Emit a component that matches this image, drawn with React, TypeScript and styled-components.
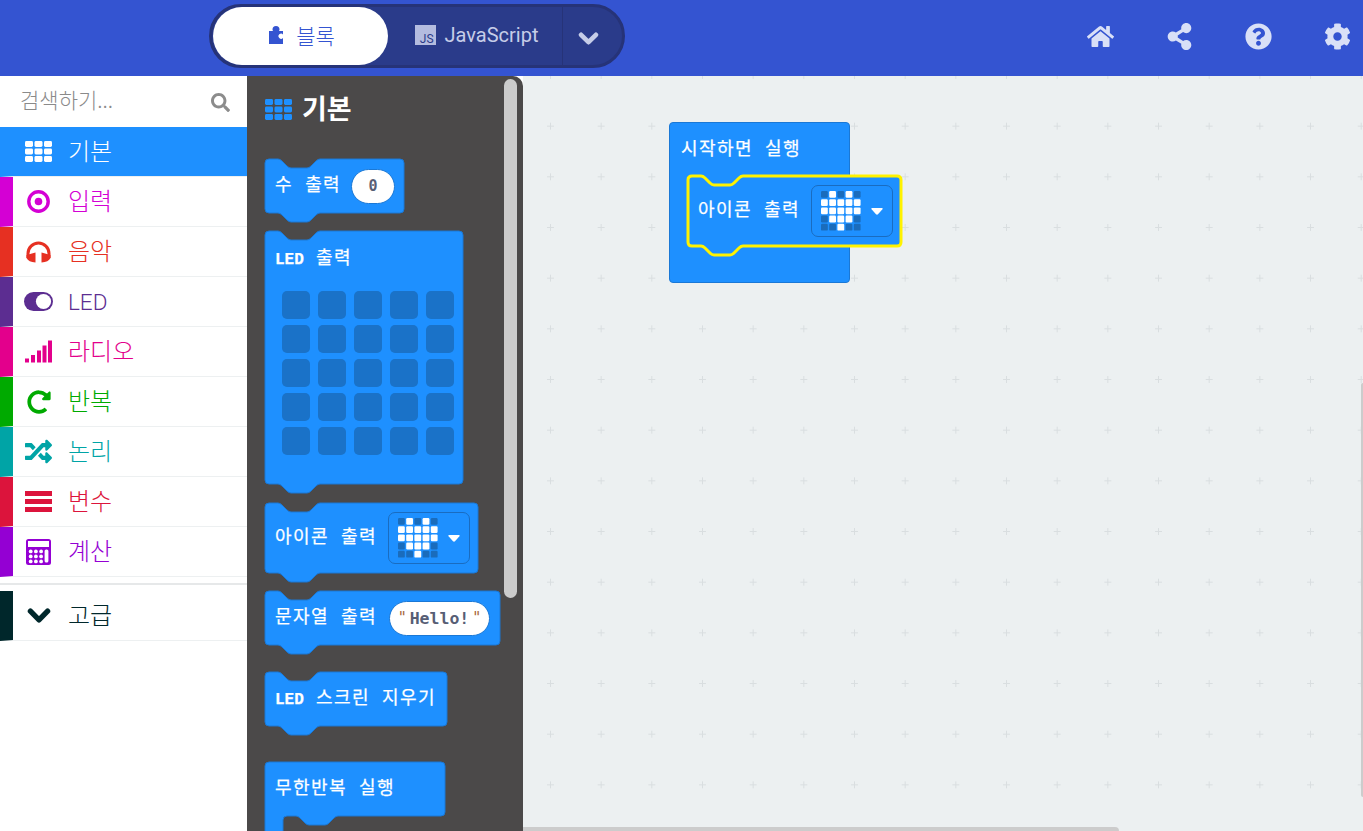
import styled, { createGlobalStyle } from "styled-components";
import {
  FaCog,
  FaHome,
  FaQuestionCircle,
  FaRandom,
  FaRedoAlt,
  FaSearch,
  FaShareAlt,
} from "react-icons/fa";

const HEART = [
  [0, 1, 0, 1, 0],
  [1, 1, 1, 1, 1],
  [1, 1, 1, 1, 1],
  [0, 1, 1, 1, 0],
  [0, 0, 1, 0, 0],
];

const KR = `"Noto Sans CJK KR", "Noto Sans", sans-serif`;

const notchTop = (x: number, y: number) =>
  `H${x + 13} Q${x + 15} ${y} ${x + 17} ${y + 2} L${x + 22} ${y + 7} Q${x + 24} ${y + 9} ${x + 26} ${y + 9} H${x + 42} Q${x + 44} ${y + 9} ${x + 46} ${y + 7} L${x + 51} ${y + 2} Q${x + 53} ${y} ${x + 55} ${y}`;

const notchBack = (x: number, y: number) =>
  `H${x + 55} Q${x + 53} ${y} ${x + 51} ${y + 2} L${x + 46} ${y + 7} Q${x + 44} ${y + 9} ${x + 42} ${y + 9} H${x + 26} Q${x + 24} ${y + 9} ${x + 22} ${y + 7} L${x + 17} ${y + 2} Q${x + 15} ${y} ${x + 13} ${y}`;

const blockPath = (w: number, h: number) =>
  `M4 0 ${notchTop(0, 0)} H${w - 4} Q${w} 0 ${w} 4 V${h - 4} Q${w} ${h} ${w - 4} ${h} ${notchBack(0, h)} H4 Q0 ${h} 0 ${h - 4} V4 Q0 0 4 0 Z`;

const loopPath = (w: number, h: number) =>
  `M4 0 H${w - 4} Q${w} 0 ${w} 4 V${h - 4} Q${w} ${h} ${w - 4} ${h} ${notchBack(18, h)} H22 Q18 ${h} 18 ${h + 4} V120 H0 V4 Q0 0 4 0 Z`;

const GlobalStyle = createGlobalStyle`
  html, body {
    margin: 0;
    height: 100%;
    overflow: hidden;
  }
  body {
    font-family: ${KR};
  }
`;

const Page = styled.div`
  width: 1363px;
  height: 831px;
  display: flex;
  flex-direction: column;
  overflow: hidden;
`;

const Header = styled.header`
  height: 76px;
  flex: none;
  display: flex;
  align-items: flex-start;
  background: #3454d1;
  padding: 4px 12px 0 209px;
  box-sizing: border-box;
`;

const Toggle = styled.div`
  width: 416px;
  height: 64px;
  box-sizing: border-box;
  display: flex;
  align-items: stretch;
  background: #2a3b8a;
  border: 3px solid #263378;
  border-radius: 32px;
  padding: 0 0 0 1px;
`;

const BlocksTab = styled.div`
  width: 175px;
  background: #fff;
  border-radius: 29px;
  display: flex;
  align-items: center;
  justify-content: center;
  gap: 13px;
  color: #3454d1;
  font-size: 21px;
  font-weight: 300;
  padding: 0 0 3px 3px;
  box-sizing: border-box;
`;

const JsTab = styled.div`
  width: 174px;
  display: flex;
  align-items: center;
  justify-content: center;
  gap: 9px;
  color: #c6cde8;
  font-family: Roboto, sans-serif;
  font-size: 20px;
  padding: 0 0 2px 3px;
  box-sizing: border-box;
`;

const JsBadge = styled.span`
  width: 21px;
  height: 20px;
  background: #b4bcdf;
  color: #2a3b8a;
  font-family: Roboto, sans-serif;
  font-size: 12px;
  line-height: 12px;
  display: flex;
  align-items: flex-end;
  justify-content: flex-end;
  padding: 0 2px 0 0;
  box-sizing: border-box;
`;

const MoreTab = styled.div`
  flex: 1;
  display: flex;
  align-items: center;
  justify-content: center;
  border-left: 1px solid #263378;
  color: #c6cde8;
  padding: 5px 8px 0 0;
`;

const HeaderIcons = styled.div`
  margin-left: auto;
  display: flex;
  gap: 52px;
  color: #d9e0f7;
  font-size: 27px;
  padding-top: 19px;
`;

const Main = styled.main`
  flex: 1;
  display: flex;
  min-height: 0;
`;

const Toolbox = styled.aside`
  width: 247px;
  flex: none;
  background: #fff;
`;

const Search = styled.div`
  height: 51px;
  display: flex;
  align-items: center;
  justify-content: space-between;
  padding: 0 17px 5px 20px;
  color: #8a8a8a;
  font-size: 21px;
  font-weight: 300;
  box-sizing: border-box;
`;

const SearchGlass = styled(FaSearch)`
  font-size: 19px;
  color: #8c8c8c;
  margin-top: 6px;
`;

const Row = styled.div<{ $color: string; $selected?: boolean }>`
  height: 50px;
  box-sizing: border-box;
  display: flex;
  align-items: center;
  border-left: 13px solid ${(p) => (p.$selected ? "#1e90ff" : p.$color)};
  border-bottom: 1px solid #edf0f1;
  background: ${(p) => (p.$selected ? "#1e90ff" : "#fff")};
  color: ${(p) => (p.$selected ? "#fff" : p.$color)};
`;

const RowIcon = styled.span`
  width: 29px;
  height: 29px;
  margin-left: 11px;
  display: flex;
  align-items: center;
  justify-content: center;
`;

const RowLabel = styled.span<{ $latin?: boolean }>`
  margin-left: 15px;
  font-family: ${(p) => (p.$latin ? "Roboto, sans-serif" : KR)};
  font-size: ${(p) => (p.$latin ? "22.5px" : "24px")};
  font-weight: 300;
  line-height: 30px;
  margin-top: ${(p) => (p.$latin ? "0" : "-3px")};
`;

const Separator = styled.div`
  height: 8px;
  margin-bottom: 6px;
  border-bottom: 2px solid #e6e8e9;
  box-sizing: border-box;
`;

const Flyout = styled.section`
  width: 276px;
  flex: none;
  position: relative;
  background: #4b4949;
  border-radius: 0 10px 0 0;
  overflow: hidden;
  padding: 12px 0 0 18px;
  box-sizing: border-box;
`;

const FlyoutTitle = styled.div`
  display: flex;
  align-items: center;
  gap: 10px;
  height: 38px;
  color: #fff;
  font-size: 27px;
  font-weight: 700;
  svg {
    color: #1e90ff;
    margin-top: 4px;
  }
`;

const FlyoutScroll = styled.div`
  position: absolute;
  top: 3px;
  right: 6px;
  width: 13px;
  height: 519px;
  border-radius: 7px;
  background: #cccccc;
`;

const Block = styled.div<{ $w: number; $h: number; $mt?: number }>`
  position: relative;
  width: ${(p) => p.$w}px;
  height: ${(p) => p.$h}px;
  margin-top: ${(p) => p.$mt ?? 0}px;
  flex: none;
`;

const Shape = styled.svg`
  position: absolute;
  left: 0;
  top: 0;
  overflow: visible;
`;

const BlockRow = styled.div`
  position: relative;
  height: 100%;
  display: flex;
  align-items: center;
  padding: 0 8px 0 10px;
  gap: 8px;
  box-sizing: border-box;
`;

const BlockTextColumn = styled.div`
  position: relative;
  padding: 15px 10px 0;
  line-height: 22px;
`;

const BlockText = styled.span`
  color: #fff;
  font-family: "Liberation Mono", ${KR};
  font-size: 18px;
  font-weight: 400;
  letter-spacing: 1.4px;
  line-height: 22px;
  white-space: pre;
  -webkit-text-stroke: 0.25px #fff;
`;

const LedWord = styled.b`
  font-size: 16px;
  font-weight: 700;
  letter-spacing: 0;
`;

const ValueField = styled.div<{ $w: number; $mr?: number }>`
  width: ${(p) => p.$w}px;
  height: 35px;
  box-sizing: border-box;
  margin: 0 ${(p) => p.$mr ?? 0}px 0 auto;
  background: #fff;
  border: 1px solid #1a78d6;
  border-radius: 18px;
  display: flex;
  align-items: center;
  justify-content: center;
  color: #575e75;
  font-family: "DejaVu Sans Mono", monospace;
  font-size: 16.5px;
  font-weight: 700;
`;

const SmallValue = styled.span`
  font-size: 15px;
`;

const Quote = styled.span`
  color: #a8683c;
  font-weight: 400;
  font-size: 15px;
  margin: 0 3px;
`;

const IconField = styled.div`
  width: 82px;
  height: 52px;
  margin-left: auto;
  box-sizing: border-box;
  border: 1px solid #1a6cc0;
  border-radius: 7px;
  display: flex;
  align-items: center;
  padding-left: 9px;
  gap: 10px;
`;

const Caret = styled.svg`
  flex: none;
`;

const LedGrid = styled.div`
  display: grid;
  grid-template-columns: repeat(5, 28px);
  grid-auto-rows: 28px;
  column-gap: 8px;
  row-gap: 6px;
  padding: 20px 0 0 7px;
`;

const LedCell = styled.span`
  background: #1a72c8;
  border-radius: 5px;
`;

const Workspace = styled.section`
  flex: 1;
  position: relative;
  background: #ecf0f1;
  overflow: hidden;
`;

const GridLayer = styled.svg`
  position: absolute;
  inset: 0;
  width: 100%;
  height: 100%;
`;

const StartBlock = styled.div`
  position: absolute;
  left: 146px;
  top: 46px;
  width: 181px;
  height: 161px;
  box-sizing: border-box;
  background: #1e90ff;
  border: 1px solid #1a78d6;
  border-radius: 4px;
`;

const StartTitle = styled.div`
  height: 53px;
  padding: 13px 0 0 11px;
  box-sizing: border-box;
`;

const StartInner = styled.div`
  margin-left: 18px;
`;

const ScrollRight = styled.div`
  position: absolute;
  right: 0;
  top: 307px;
  width: 2px;
  height: 414px;
  background: #cccccc;
  border-radius: 2px 0 0 2px;
`;

const ScrollBottom = styled.div`
  position: absolute;
  left: 0;
  bottom: 0;
  width: 596px;
  height: 4px;
  background: #cccccc;
  border-radius: 0 4px 0 0;
`;

function BlockShape({ d, highlight }: { d: string; highlight?: boolean }) {
  return (
    <Shape width="1" height="1">
      <path
        d={d}
        fill="#1e90ff"
        stroke={highlight ? "#fff200" : "#1a78d6"}
        strokeWidth={highlight ? 3 : 1}
      />
    </Shape>
  );
}

function GridIcon() {
  const cells = [];
  for (let r = 0; r < 3; r++) {
    for (let c = 0; c < 3; c++) {
      cells.push(
        <rect key={`${r}${c}`} x={c * 9.5} y={r * 7.5} width="8" height="6" rx="1.4" />
      );
    }
  }
  return (
    <svg width="27" height="21" viewBox="0 0 27 21" fill="currentColor">
      {cells}
    </svg>
  );
}

function PuzzleIcon() {
  return (
    <svg width="14" height="18" viewBox="0 0 14 18" fill="currentColor">
      <path
        fillRule="evenodd"
        d="M0 5 H4 Q3.5 4.4 3.5 3.5 A3.5 3.5 0 0 1 10.5 3.5 Q10.5 4.4 10 5 H14 V8.4 A2.6 2.6 0 1 0 14 12 V18 H0 Z"
      />
    </svg>
  );
}

function Chevron({ w, h }: { w: number; h: number }) {
  return (
    <svg width={w} height={h} viewBox="0 0 22 14" fill="none" stroke="currentColor">
      <path d="M3 3 L11 11 L19 3" strokeWidth="5" strokeLinecap="round" strokeLinejoin="round" />
    </svg>
  );
}

function DotIcon() {
  return (
    <svg width="23" height="23" viewBox="0 0 23 23" fill="currentColor">
      <circle cx="11.5" cy="11.5" r="9.7" fill="none" stroke="currentColor" strokeWidth="3.4" />
      <circle cx="11.5" cy="11.5" r="3.8" />
    </svg>
  );
}

function HeadphonesIcon() {
  return (
    <svg width="25" height="22" viewBox="0 0 25 22" fill="currentColor">
      <path
        d="M2 17 V12.5 A10.5 10.5 0 0 1 23 12.5 V17"
        fill="none"
        stroke="currentColor"
        strokeWidth="3"
      />
      <path d="M0.5 14 L9.5 11.5 V21.5 Q2.5 21 0.5 17 Z" />
      <path d="M24.5 14 L15.5 11.5 V21.5 Q22.5 21 24.5 17 Z" />
    </svg>
  );
}

function ToggleIcon() {
  return (
    <svg width="29" height="19" viewBox="0 0 29 19">
      <rect width="29" height="19" rx="9.5" fill="currentColor" />
      <circle cx="19.5" cy="9.5" r="7.6" fill="#fff" />
    </svg>
  );
}

function SignalIcon() {
  return (
    <svg width="27" height="23" viewBox="0 0 27 23" fill="currentColor">
      <rect x="0" y="18.5" width="4" height="4" />
      <rect x="6" y="15" width="4" height="7.5" />
      <rect x="12" y="10.5" width="4" height="12" />
      <rect x="17.5" y="5.5" width="4" height="17" />
      <rect x="23" y="0.5" width="4" height="22" />
    </svg>
  );
}

function ListIcon() {
  return (
    <svg width="27" height="21" viewBox="0 0 27 21" fill="currentColor">
      <rect x="0" y="0" width="27" height="5" />
      <rect x="0" y="8" width="27" height="5" />
      <rect x="0" y="16" width="27" height="5" />
    </svg>
  );
}

function CalculatorIcon() {
  const keys = [];
  for (let r = 0; r < 3; r++) {
    for (let c = 0; c < 3; c++) {
      keys.push(
        <circle key={`${r}${c}`} cx={4.7 + c * 5.2} cy={12.4 + r * 5} r="1.9" fill="#fff" />
      );
    }
  }
  return (
    <svg width="25" height="26" viewBox="0 0 25 26">
      <rect width="25" height="26" rx="2.5" fill="currentColor" />
      <rect x="2" y="2" width="21" height="6" fill="#fff" />
      {keys}
      <rect x="18.6" y="10.5" width="3.8" height="13" rx="1.6" fill="#fff" />
    </svg>
  );
}

function HeartField() {
  return (
    <IconField>
      <svg width="40" height="40" viewBox="0 0 40 40">
        {HEART.flatMap((row, r) =>
          row.map((on, c) => (
            <rect
              key={`${r}${c}`}
              x={c * 8.2}
              y={r * 8.2}
              width="6.8"
              height="6.8"
              rx="1.2"
              fill={on ? "#fff" : "#1a6cbc"}
            />
          ))
        )}
      </svg>
      <Caret width="12" height="7" viewBox="0 0 12 7" fill="#fff">
        <path d="M1 0 H11 Q12.3 0 11.4 1.2 L7 6.3 Q6 7.2 5 6.3 L0.6 1.2 Q-0.3 0 1 0 Z" />
      </Caret>
    </IconField>
  );
}

const categories = [
  { label: "입력", color: "#d400d4", icon: <DotIcon /> },
  { label: "음악", color: "#e63022", icon: <HeadphonesIcon /> },
  { label: "LED", color: "#5c2d91", icon: <ToggleIcon />, latin: true },
  { label: "라디오", color: "#e3008c", icon: <SignalIcon /> },
  { label: "반복", color: "#00aa00", icon: <FaRedoAlt size={24} /> },
  { label: "논리", color: "#00a4a6", icon: <FaRandom size={27} /> },
  { label: "변수", color: "#dc143c", icon: <ListIcon /> },
  { label: "계산", color: "#9400d3", icon: <CalculatorIcon /> },
];

export default function App() {
  return (
    <Page>
      <GlobalStyle />
      <Header>
        <Toggle>
          <BlocksTab>
            <PuzzleIcon />
            블록
          </BlocksTab>
          <JsTab>
            <JsBadge>JS</JsBadge>
            JavaScript
          </JsTab>
          <MoreTab>
            <Chevron w={21} h={13} />
          </MoreTab>
        </Toggle>
        <HeaderIcons>
          <FaHome />
          <FaShareAlt />
          <FaQuestionCircle />
          <FaCog />
        </HeaderIcons>
      </Header>
      <Main>
        <Toolbox>
          <Search>
            검색하기...
            <SearchGlass />
          </Search>
          <Row $color="#1e90ff" $selected>
            <RowIcon>
              <GridIcon />
            </RowIcon>
            <RowLabel>기본</RowLabel>
          </Row>
          {categories.map((c) => (
            <Row key={c.label} $color={c.color}>
              <RowIcon>{c.icon}</RowIcon>
              <RowLabel $latin={c.latin}>{c.label}</RowLabel>
            </Row>
          ))}
          <Separator />
          <Row $color="#00272b">
            <RowIcon>
              <Chevron w={24} h={15} />
            </RowIcon>
            <RowLabel>고급</RowLabel>
          </Row>
        </Toolbox>
        <Flyout>
          <FlyoutScroll />
          <FlyoutTitle>
            <GridIcon />
            기본
          </FlyoutTitle>
          <Block $w={139} $h={54} $mt={33}>
            <BlockShape d={blockPath(139, 54)} />
            <BlockRow>
              <BlockText>수 출력</BlockText>
              <ValueField $w={44} $mr={1}>
                <SmallValue>0</SmallValue>
              </ValueField>
            </BlockRow>
          </Block>
          <Block $w={198} $h={253} $mt={18}>
            <BlockShape d={blockPath(198, 253)} />
            <BlockTextColumn>
              <BlockText>
                <LedWord>LED</LedWord> 출력
              </BlockText>
              <LedGrid>
                {Array.from({ length: 25 }).map((_, i) => (
                  <LedCell key={i} />
                ))}
              </LedGrid>
            </BlockTextColumn>
          </Block>
          <Block $w={213} $h={70} $mt={19}>
            <BlockShape d={blockPath(213, 70)} />
            <BlockRow>
              <BlockText>아이콘 출력</BlockText>
              <HeartField />
            </BlockRow>
          </Block>
          <Block $w={235} $h={54} $mt={18}>
            <BlockShape d={blockPath(235, 54)} />
            <BlockRow>
              <BlockText>문자열 출력</BlockText>
              <ValueField $w={101} $mr={2}>
                <Quote>"</Quote>Hello!<Quote>"</Quote>
              </ValueField>
            </BlockRow>
          </Block>
          <Block $w={182} $h={54} $mt={27}>
            <BlockShape d={blockPath(182, 54)} />
            <BlockRow>
              <BlockText>
                <LedWord>LED</LedWord> 스크린 지우기
              </BlockText>
            </BlockRow>
          </Block>
          <Block $w={180} $h={54} $mt={36}>
            <BlockShape d={loopPath(180, 54)} />
            <BlockRow>
              <BlockText>무한반복 실행</BlockText>
            </BlockRow>
          </Block>
        </Flyout>
        <Workspace>
          <GridLayer>
            <defs>
              <pattern id="plus" x="24" y="-4" width="50.67" height="50.67" patternUnits="userSpaceOnUse">
                <path d="M0 3.5 H7 M3.5 0 V7" stroke="#d9dee0" strokeWidth="1" />
              </pattern>
            </defs>
            <rect width="100%" height="100%" fill="url(#plus)" />
          </GridLayer>
          <StartBlock>
            <StartTitle>
              <BlockText>시작하면 실행</BlockText>
            </StartTitle>
            <StartInner>
              <Block $w={213} $h={70}>
                <BlockShape d={blockPath(213, 70)} highlight />
                <BlockRow>
                  <BlockText>아이콘 출력</BlockText>
                  <HeartField />
                </BlockRow>
              </Block>
            </StartInner>
          </StartBlock>
          <ScrollRight />
          <ScrollBottom />
        </Workspace>
      </Main>
    </Page>
  );
}
